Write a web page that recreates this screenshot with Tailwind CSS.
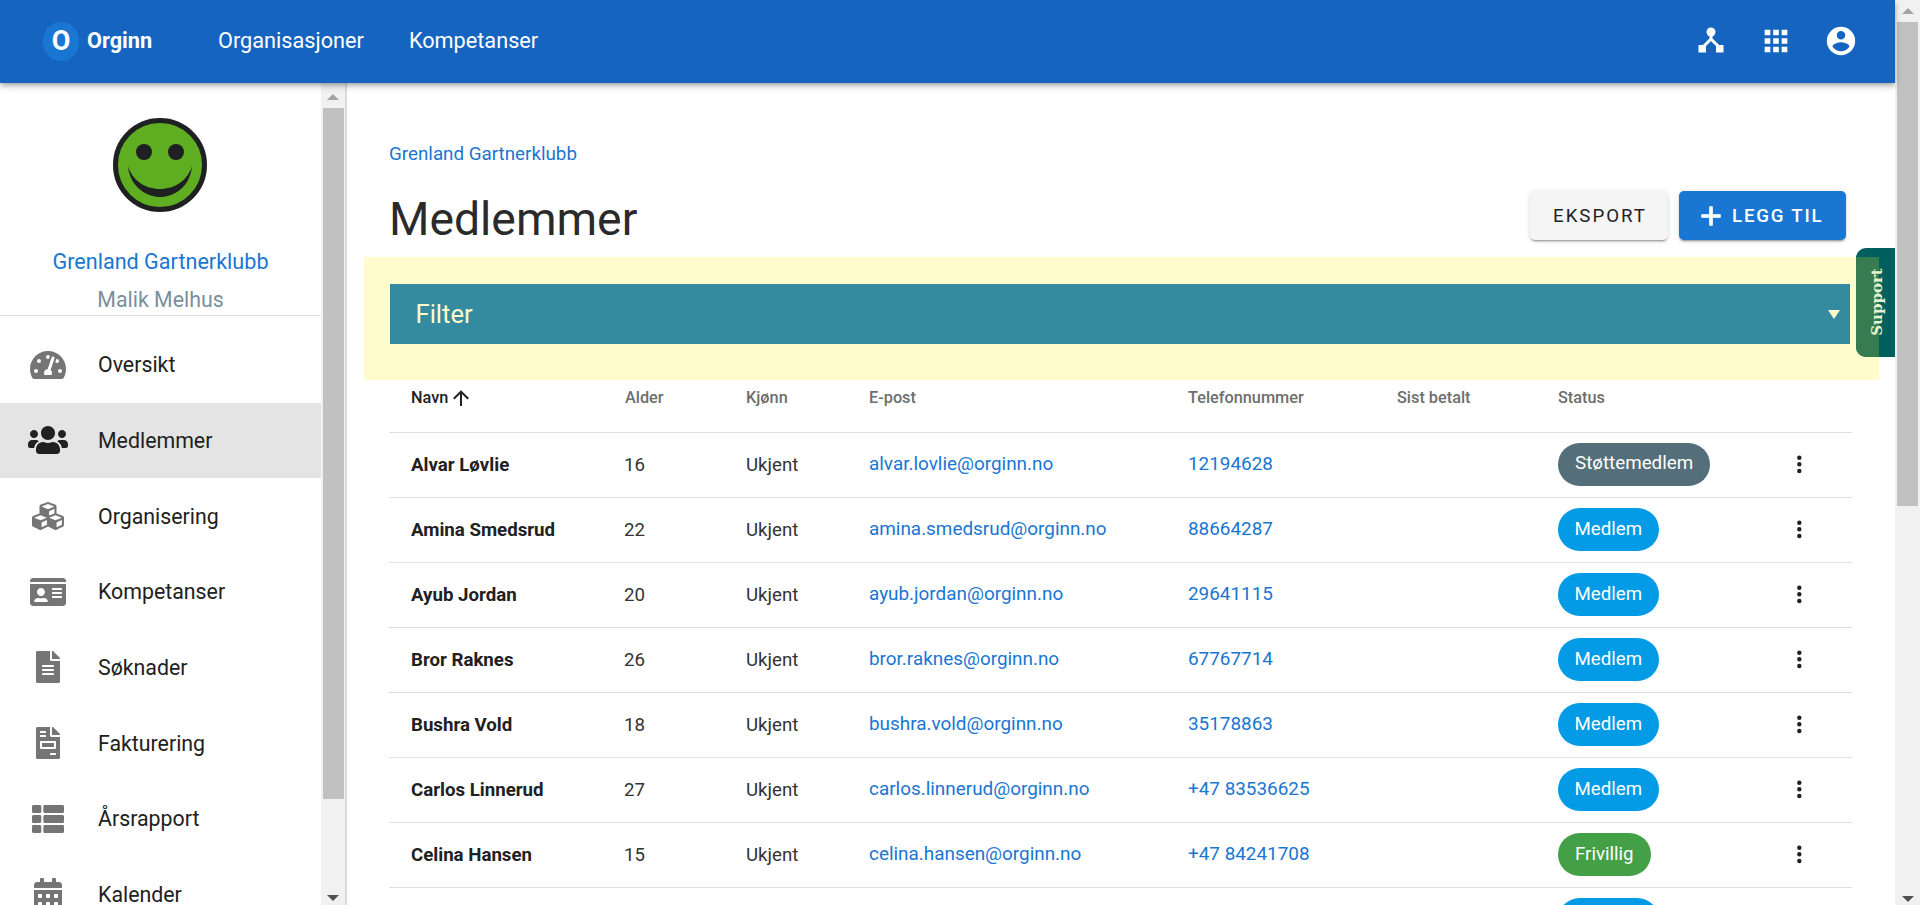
<!DOCTYPE html>
<html lang="no">
<head>
  <meta charset="UTF-8">
  <meta name="viewport" content="width=device-width, initial-scale=1.0">
  <title>Medlemmer - Orginn</title>
  <script src="https://cdn.jsdelivr.net/npm/@tailwindcss/browser@4"></script>
</head>
<body class="bg-white font-[Roboto,sans-serif] text-[#212121]">
  <div class="flex h-[905px] w-[1920px] overflow-hidden">
    <div class="relative flex w-[1895px] flex-col">

      <!-- Top bar -->
      <header class="relative z-20 flex h-[83px] shrink-0 items-center bg-[#1565c0] pl-[43px] pr-[37px] text-white shadow-[0_2px_4px_-1px_rgba(0,0,0,.2),0_4px_5px_0_rgba(0,0,0,.14),0_1px_10px_0_rgba(0,0,0,.12)]">
        <div class="flex h-[39px] w-[36px] items-center justify-center rounded-full bg-[#1976d2] text-[27px] font-bold">O</div>
        <div class="ml-[8px] w-[67px] text-[21.7px] font-bold">Orginn</div>
        <nav class="ml-[64px] flex gap-[45px] text-[21.7px]">
          <span>Organisasjoner</span>
          <span>Kompetanser</span>
        </nav>
        <div class="ml-auto -mt-[2px] flex items-center gap-[31px]">
          <svg class="h-[34px] w-[34px]" viewBox="0 0 34 34" fill="white" stroke="none"><circle cx="17" cy="8" r="4.5"/><rect x="4.5" y="21" width="7.5" height="7.5"/><rect x="22" y="21" width="7.5" height="7.5"/><path d="M17 8V16M17 15L8 24M17 15L26 24" stroke="white" stroke-width="3" fill="none"/></svg>
          <svg class="h-[34px] w-[34px]" viewBox="0 0 24 24" fill="white"><path d="M16,20H20V16H16M16,14H20V10H16M10,8H14V4H10M16,8H20V4H16M10,14H14V10H10M4,14H8V10H4M4,20H8V16H4M10,20H14V16H10M4,8H8V4H4V8Z"/></svg>
          <svg class="h-[34px] w-[34px]" viewBox="0 0 24 24" fill="white"><path d="M12,19.2C9.5,19.2 7.29,17.92 6,16C6.03,14 10,12.9 12,12.9C14,12.9 17.97,14 18,16C16.71,17.92 14.5,19.2 12,19.2M12,5A3,3 0 0,1 15,8A3,3 0 0,1 12,11A3,3 0 0,1 9,8A3,3 0 0,1 12,5M12,2A10,10 0 0,0 2,12A10,10 0 0,0 12,22A10,10 0 0,0 22,12A10,10 0 0,0 12,2Z"/></svg>
        </div>
      </header>

      <div class="flex min-h-0 flex-1">
        <!-- Sidebar -->
        <aside class="flex w-[347px] shrink-0">
          <div class="w-[321px] shrink-0 overflow-hidden">
            <div class="flex h-[233px] flex-col items-center border-b border-[#e0e0e0] pt-[35px]">
              <svg class="mr-[2px] h-[94px] w-[94px]" viewBox="0 0 94 94">
                <circle cx="47" cy="47" r="44.5" fill="#5fad21" stroke="#1f2022" stroke-width="5"/>
                <circle cx="31" cy="34" r="8" fill="#1f2022"/>
                <circle cx="63" cy="34" r="8" fill="#1f2022"/>
                <path d="M15 48C17 70 35 79 47 79C60 79 77 70 79 48C75 62 62 71 47 71C32 71 19 62 15 48Z" fill="#1f2022"/>
              </svg>
              <div class="mt-[37px] text-[21.6px] leading-[25px] text-[#1976d2]">Grenland Gartnerklubb</div>
              <div class="mt-[13px] text-[21.33px] leading-[25px] text-[#78909c]">Malik Melhus</div>
            </div>
            <ul class="pt-[11px] text-[21.33px] text-[#212121]">
              <li class="flex h-[75.67px] items-center">
                <span class="flex w-[98px] justify-center pr-[2px]"><svg class="h-8 w-9 fill-[#757575]" viewBox="0 0 576 512"><path d="M288 32C128.94 32 0 160.94 0 320c0 52.8 14.25 102.26 39.06 144.8 5.61 9.62 16.3 15.2 27.44 15.2h443c11.14 0 21.83-5.58 27.44-15.2C561.75 422.26 576 372.8 576 320c0-159.06-128.94-288-288-288zm0 64c14.71 0 26.58 10.13 30.32 23.65-1.11 2.26-2.64 4.23-3.45 6.67l-9.22 27.67c-5.13 3.49-10.97 6.01-17.64 6.01-17.67 0-32-14.33-32-32S270.33 96 288 96zM96 384c-17.67 0-32-14.33-32-32s14.33-32 32-32 32 14.33 32 32-14.33 32-32 32zm48-160c-17.67 0-32-14.33-32-32s14.33-32 32-32 32 14.33 32 32-14.33 32-32 32zm246.77-72.41l-61.33 184C343.13 347.33 352 364.54 352 384c0 11.72-3.38 22.55-8.88 32H232.88c-5.5-9.45-8.88-20.28-8.88-32 0-33.94 26.5-61.43 59.9-63.59l61.34-184.01c4.17-12.56 17.73-19.45 30.36-15.17 12.57 4.19 19.35 17.79 15.17 30.36zm14.66 57.2l15.52-46.55c3.47-1.29 7.13-2.23 11.05-2.23 17.67 0 32 14.33 32 32s-14.33 32-32 32c-11.38-.01-20.89-6.28-26.57-15.22zM480 384c-17.67 0-32-14.33-32-32s14.33-32 32-32 32 14.33 32 32-14.33 32-32 32z"/></svg></span>
                <span class="pt-[1px]">Oversikt</span>
              </li>
              <li class="flex h-[75.67px] items-center bg-[#e4e4e4]">
                <span class="flex w-[98px] justify-center pr-[2px]"><svg class="h-8 w-10 fill-[#212121]" viewBox="0 0 640 512"><path d="M96 224c35.3 0 64-28.7 64-64s-28.7-64-64-64-64 28.7-64 64 28.7 64 64 64zm448 0c35.3 0 64-28.7 64-64s-28.7-64-64-64-64 28.7-64 64 28.7 64 64 64zm32 32h-64c-17.6 0-33.5 7.1-45.1 18.6 40.3 22.1 68.9 62 75.1 109.4h66c17.7 0 32-14.3 32-32v-32c0-35.3-28.7-64-64-64zm-256 0c61.9 0 112-50.1 112-112S381.9 32 320 32 208 82.1 208 144s50.1 112 112 112zm76.8 32h-8.3c-20.8 10-43.9 16-68.5 16s-47.6-6-68.5-16h-8.3C179.6 288 128 339.6 128 403.2V432c0 26.5 21.5 48 48 48h288c26.5 0 48-21.5 48-48v-28.8c0-63.6-51.6-115.2-115.2-115.2zm-223.7-13.4C161.5 263.1 145.6 256 128 256H64c-35.3 0-64 28.7-64 64v32c0 17.7 14.3 32 32 32h65.9c6.3-47.4 34.9-87.3 75.2-109.4z"/></svg></span>
                <span class="pt-[1px]">Medlemmer</span>
              </li>
              <li class="flex h-[75.67px] items-center">
                <span class="flex w-[98px] justify-center pr-[2px]"><svg class="h-8 w-8 fill-[#757575]" viewBox="0 0 512 512"><path d="M488.6 250.2L392 214V105.5c0-15-9.3-28.4-23.4-33.7l-100-37.5c-8.1-3.1-17.1-3.1-25.3 0l-100 37.5c-14.1 5.3-23.4 18.7-23.4 33.7V214l-96.6 36.2C9.3 255.5 0 268.9 0 283.9V394c0 13.6 7.7 26.1 19.9 32.2l100 50c10.1 5.1 22.1 5.1 32.2 0l103.9-52 103.9 52c10.1 5.1 22.1 5.1 32.2 0l100-50c12.2-6.1 19.9-18.6 19.9-32.2V283.9c0-15-9.3-28.4-23.4-33.7zM358 214.8l-85 31.9v-68.2l85-37v73.3zM154 104.1l102-38.2 102 38.2v.6l-102 41.4-102-41.4v-.6zm84 291.1l-85 42.5v-79.1l85-38.8v75.4zm0-112l-102 41.4-102-41.4v-.6l102-38.2 102 38.2v.6zm240 112l-85 42.5v-79.1l85-38.8v75.4zm0-112l-102 41.4-102-41.4v-.6l102-38.2 102 38.2v.6z"/></svg></span>
                <span class="pt-[1px]">Organisering</span>
              </li>
              <li class="flex h-[75.67px] items-center">
                <span class="flex w-[98px] justify-center pr-[2px]"><svg class="h-8 w-9 fill-[#757575]" viewBox="0 0 576 512"><path d="M528 32H48C21.5 32 0 53.5 0 80v16h576V80c0-26.5-21.5-48-48-48zM0 432c0 26.5 21.5 48 48 48h480c26.5 0 48-21.5 48-48V128H0v304zm352-232c0-4.4 3.6-8 8-8h144c4.4 0 8 3.6 8 8v16c0 4.4-3.6 8-8 8H360c-4.4 0-8-3.6-8-8v-16zm0 64c0-4.4 3.6-8 8-8h144c4.4 0 8 3.6 8 8v16c0 4.4-3.6 8-8 8H360c-4.4 0-8-3.6-8-8v-16zm0 64c0-4.4 3.6-8 8-8h144c4.4 0 8 3.6 8 8v16c0 4.4-3.6 8-8 8H360c-4.4 0-8-3.6-8-8v-16zM176 192c35.3 0 64 28.7 64 64s-28.7 64-64 64-64-28.7-64-64 28.7-64 64-64zM67.1 396.2C75.5 370.5 99.6 352 128 352h8.2c12.3 5.1 25.7 8 39.8 8s27.6-2.9 39.8-8h8.2c28.4 0 52.5 18.5 60.9 44.2 3.2 9.9-5.2 19.8-15.6 19.8H82.7c-10.4 0-18.8-10-15.6-19.8z"/></svg></span>
                <span class="pt-[1px]">Kompetanser</span>
              </li>
              <li class="flex h-[75.67px] items-center">
                <span class="flex w-[98px] justify-center pr-[2px]"><svg class="h-8 w-6 fill-[#757575]" viewBox="0 0 384 512"><path d="M224 136V0H24C10.7 0 0 10.7 0 24v464c0 13.3 10.7 24 24 24h336c13.3 0 24-10.7 24-24V160H248c-13.2 0-24-10.8-24-24zm64 236c0 6.6-5.4 12-12 12H108c-6.6 0-12-5.4-12-12v-8c0-6.6 5.4-12 12-12h168c6.6 0 12 5.4 12 12v8zm0-64c0 6.6-5.4 12-12 12H108c-6.6 0-12-5.4-12-12v-8c0-6.6 5.4-12 12-12h168c6.6 0 12 5.4 12 12v8zm0-72v8c0 6.6-5.4 12-12 12H108c-6.6 0-12-5.4-12-12v-8c0-6.6 5.4-12 12-12h168c6.6 0 12 5.4 12 12zm96-114.1v6.1H256V0h6.1c6.4 0 12.5 2.5 17 7l97.9 98c4.5 4.5 7 10.6 7 16.9z"/></svg></span>
                <span class="pt-[1px]">Søknader</span>
              </li>
              <li class="flex h-[75.67px] items-center">
                <span class="flex w-[98px] justify-center pr-[2px]"><svg class="h-8 w-6 fill-[#757575]" viewBox="0 0 384 512"><path d="M288 256H96v64h192v-64zm89-151L279.1 7c-4.5-4.5-10.6-7-17-7H256v128h128v-6.1c0-6.3-2.5-12.4-7-16.9zm-153 31V0H24C10.7 0 0 10.7 0 24v464c0 13.3 10.7 24 24 24h336c13.3 0 24-10.7 24-24V160H248c-13.2 0-24-10.8-24-24zM64 72c0-4.42 3.58-8 8-8h80c4.42 0 8 3.58 8 8v16c0 4.42-3.58 8-8 8H72c-4.42 0-8-3.58-8-8V72zm0 64c0-4.42 3.58-8 8-8h80c4.42 0 8 3.58 8 8v16c0 4.42-3.58 8-8 8H72c-4.42 0-8-3.58-8-8v-16zm256 304c0 4.42-3.58 8-8 8h-80c-4.42 0-8-3.58-8-8v-16c0-4.42 3.58-8 8-8h80c4.42 0 8 3.58 8 8v16zm0-200v96c0 8.84-7.16 16-16 16H80c-8.84 0-16-7.16-16-16v-96c0-8.84 7.16-16 16-16h224c8.84 0 16 7.16 16 16z"/></svg></span>
                <span class="pt-[1px]">Fakturering</span>
              </li>
              <li class="flex h-[75.67px] items-center">
                <span class="flex w-[98px] justify-center pr-[2px]"><svg class="h-8 w-8 fill-[#757575]" viewBox="0 0 512 512"><path d="M149.333 216v80c0 13.255-10.745 24-24 24H24c-13.255 0-24-10.745-24-24v-80c0-13.255 10.745-24 24-24h101.333c13.255 0 24 10.745 24 24zM0 376v80c0 13.255 10.745 24 24 24h101.333c13.255 0 24-10.745 24-24v-80c0-13.255-10.745-24-24-24H24c-13.255 0-24 10.745-24 24zM125.333 32H24C10.745 32 0 42.745 0 56v80c0 13.255 10.745 24 24 24h101.333c13.255 0 24-10.745 24-24V56c0-13.255-10.745-24-24-24zm80 448H488c13.255 0 24-10.745 24-24v-80c0-13.255-10.745-24-24-24H205.333c-13.255 0-24 10.745-24 24v80c0 13.255 10.745 24 24 24zm-24-424v80c0 13.255 10.745 24 24 24H488c13.255 0 24-10.745 24-24V56c0-13.255-10.745-24-24-24H205.333c-13.255 0-24 10.745-24 24zm24 264H488c13.255 0 24-10.745 24-24v-80c0-13.255-10.745-24-24-24H205.333c-13.255 0-24 10.745-24 24v80c0 13.255 10.745 24 24 24z"/></svg></span>
                <span class="pt-[1px]">Årsrapport</span>
              </li>
              <li class="flex h-[75.67px] items-center">
                <span class="flex w-[98px] justify-center pr-[2px]"><svg class="h-8 w-7 fill-[#757575]" viewBox="0 0 448 512"><path d="M0 464c0 26.5 21.5 48 48 48h352c26.5 0 48-21.5 48-48V192H0v272zm320-196c0-6.6 5.4-12 12-12h40c6.6 0 12 5.4 12 12v40c0 6.6-5.4 12-12 12h-40c-6.6 0-12-5.4-12-12v-40zm0 128c0-6.6 5.4-12 12-12h40c6.6 0 12 5.4 12 12v40c0 6.6-5.4 12-12 12h-40c-6.6 0-12-5.4-12-12v-40zM192 268c0-6.6 5.4-12 12-12h40c6.6 0 12 5.4 12 12v40c0 6.6-5.4 12-12 12h-40c-6.6 0-12-5.4-12-12v-40zm0 128c0-6.6 5.4-12 12-12h40c6.6 0 12 5.4 12 12v40c0 6.6-5.4 12-12 12h-40c-6.6 0-12-5.4-12-12v-40zM64 268c0-6.6 5.4-12 12-12h40c6.6 0 12 5.4 12 12v40c0 6.6-5.4 12-12 12H76c-6.6 0-12-5.4-12-12v-40zm0 128c0-6.6 5.4-12 12-12h40c6.6 0 12 5.4 12 12v40c0 6.6-5.4 12-12 12H76c-6.6 0-12-5.4-12-12v-40zM400 64h-48V16c0-8.8-7.2-16-16-16h-32c-8.8 0-16 7.2-16 16v48H160V16c0-8.8-7.2-16-16-16h-32c-8.8 0-16 7.2-16 16v48H48C21.5 64 0 85.5 0 112v48h448v-48c0-26.5-21.5-48-48-48z"/></svg></span>
                <span class="pt-[1px]">Kalender</span>
              </li>
            </ul>
          </div>
          <!-- Sidebar scrollbar -->
          <div class="flex w-[24px] shrink-0 flex-col bg-[#f1f1f1] pl-[2px]">
            <div class="flex h-[25px] shrink-0 items-center justify-center pr-[2px] pt-[2px]"><svg class="h-[6px] w-[12px]" viewBox="0 0 12 6"><path d="M6 0L12 6H0Z" fill="#a3a3a3"/></svg></div>
            <div class="h-[691px] w-[21px] shrink-0 bg-[#c1c1c1]"></div>
            <div class="flex flex-1 items-end justify-center pb-[4px] pr-[2px]"><svg class="h-[6px] w-[12px]" viewBox="0 0 12 6"><path d="M0 0H12L6 6Z" fill="#505050"/></svg></div>
          </div>
          <div class="w-[2px] shrink-0 bg-[#dcdcdc]"></div>
        </aside>

        <!-- Main content -->
        <main class="min-w-0 flex-1 overflow-hidden pl-[42px] pr-[45px] pt-[59px]">
          <a class="block text-[18.8px] leading-[24px] text-[#1976d2]">Grenland Gartnerklubb</a>
          <div class="flex h-[91px] items-start justify-between">
            <h1 class="mt-[25px] text-[46.3px] leading-[56px] font-normal text-[#2a2a2a]">Medlemmer</h1>
            <div class="mr-[4px] mt-[25px] flex gap-[11px] text-[18.67px]">
              <button class="flex h-[49px] w-[138px] items-center justify-center rounded-[5px] bg-[#f5f5f5] pl-[2px] tracking-[2px] text-[#212121] shadow-[0_3px_1px_-2px_rgba(0,0,0,.2),0_2px_2px_0_rgba(0,0,0,.14),0_1px_5px_0_rgba(0,0,0,.12)]">EKSPORT</button>
              <button class="flex h-[49px] w-[167px] items-center rounded-[5px] bg-[#1976d2] pl-[16px] font-medium tracking-[1.8px] text-white shadow-[0_3px_1px_-2px_rgba(0,0,0,.2),0_2px_2px_0_rgba(0,0,0,.14),0_1px_5px_0_rgba(0,0,0,.12)]">
                <svg class="mr-[5px] h-8 w-8 fill-white stroke-white stroke-[0.7]" viewBox="0 0 24 24"><path d="M19,13H13V19H11V13H5V11H11V5H13V11H19V13Z"/></svg>
                LEGG TIL
              </button>
            </div>
          </div>

          <!-- Filter -->
          <section class="-ml-[25px] w-[1515px] bg-[#fffbcc] pb-[36px] pl-[25.5px] pr-[29px] pt-[27px]">
            <div class="flex h-[60px] items-center justify-between bg-[#348b9f] pl-[26px] pr-[10px] text-[#fffbcc]">
              <span class="text-[25.6px]">Filter</span>
              <svg class="h-[9px] w-[12px]" viewBox="0 0 12 9"><path d="M0 0H12L6 9Z" fill="#fffbcc"/></svg>
            </div>
          </section>

          <!-- Members table -->
          <table class="w-[1463px] table-fixed border-collapse text-left text-[18.67px] text-[#333333]">
            <colgroup>
              <col class="w-[214px]"><col class="w-[121px]"><col class="w-[124px]"><col class="w-[319px]"><col class="w-[209px]"><col class="w-[161px]"><col class="w-[221px]"><col>
            </colgroup>
            <thead class="text-[16.3px] font-medium text-[#6e6e6e]">
              <tr class="h-[52px] border-b border-[#dfdfdf]">
                <th class="pb-[16px] pl-[22px] font-medium text-[#212121]"><span class="flex items-center">Navn<svg class="ml-[1px] h-6 w-6 fill-[#212121]" viewBox="0 0 24 24"><path d="M13,20H11V8L5.5,13.5L4.08,12.08L12,4.16L19.92,12.08L18.5,13.5L13,8V20Z"/></svg></span></th>
                <th class="pb-[16px] pl-[22px] font-medium">Alder</th>
                <th class="pb-[16px] pl-[22px] font-medium">Kjønn</th>
                <th class="pb-[16px] pl-[21px] font-medium">E-post</th>
                <th class="pb-[16px] pl-[21px] font-medium">Telefonnummer</th>
                <th class="pb-[16px] pl-[21px] font-medium">Sist betalt</th>
                <th class="pb-[16px] pl-[21px] font-medium">Status</th>
                <th></th>
              </tr>
            </thead>
            <tbody>
              <tr class="h-[65px] border-b border-[#dfdfdf]">
                <td class="pl-[22px] font-bold text-[#212121]">Alvar Løvlie</td>
                <td class="pl-[21px]">16</td>
                <td class="pl-[22px]">Ukjent</td>
                <td class="pl-[21px] text-[18.9px] text-[#1976d2]">alvar.lovlie@orginn.no</td>
                <td class="pl-[21px] text-[18.9px] text-[#1976d2]">12194628</td>
                <td class="pl-[21px]"></td>
                <td class="pl-[21px]"><span class="inline-flex h-[43px] items-center rounded-full bg-[#546e7a] px-[17px] pb-[2px] text-[18.8px] text-white">Støttemedlem</span></td>
                <td class="pl-[28px]"><svg class="h-[26.67px] w-[26.67px] fill-[#212121]" viewBox="0 0 24 24"><path d="M12,16A2,2 0 0,1 14,18A2,2 0 0,1 12,20A2,2 0 0,1 10,18A2,2 0 0,1 12,16M12,10A2,2 0 0,1 14,12A2,2 0 0,1 12,14A2,2 0 0,1 10,12A2,2 0 0,1 12,10M12,4A2,2 0 0,1 14,6A2,2 0 0,1 12,8A2,2 0 0,1 10,6A2,2 0 0,1 12,4Z"/></svg></td>
              </tr>
              <tr class="h-[65px] border-b border-[#dfdfdf]">
                <td class="pl-[22px] font-bold text-[#212121]">Amina Smedsrud</td>
                <td class="pl-[21px]">22</td>
                <td class="pl-[22px]">Ukjent</td>
                <td class="pl-[21px] text-[18.9px] text-[#1976d2]">amina.smedsrud@orginn.no</td>
                <td class="pl-[21px] text-[18.9px] text-[#1976d2]">88664287</td>
                <td class="pl-[21px]"></td>
                <td class="pl-[21px]"><span class="inline-flex h-[43px] items-center rounded-full bg-[#039be5] px-[16.5px] pb-[2px] text-[18.67px] text-white">Medlem</span></td>
                <td class="pl-[28px]"><svg class="h-[26.67px] w-[26.67px] fill-[#212121]" viewBox="0 0 24 24"><path d="M12,16A2,2 0 0,1 14,18A2,2 0 0,1 12,20A2,2 0 0,1 10,18A2,2 0 0,1 12,16M12,10A2,2 0 0,1 14,12A2,2 0 0,1 12,14A2,2 0 0,1 10,12A2,2 0 0,1 12,10M12,4A2,2 0 0,1 14,6A2,2 0 0,1 12,8A2,2 0 0,1 10,6A2,2 0 0,1 12,4Z"/></svg></td>
              </tr>
              <tr class="h-[65px] border-b border-[#dfdfdf]">
                <td class="pl-[22px] font-bold text-[#212121]">Ayub Jordan</td>
                <td class="pl-[21px]">20</td>
                <td class="pl-[22px]">Ukjent</td>
                <td class="pl-[21px] text-[18.9px] text-[#1976d2]">ayub.jordan@orginn.no</td>
                <td class="pl-[21px] text-[18.9px] text-[#1976d2]">29641115</td>
                <td class="pl-[21px]"></td>
                <td class="pl-[21px]"><span class="inline-flex h-[43px] items-center rounded-full bg-[#039be5] px-[16.5px] pb-[2px] text-[18.67px] text-white">Medlem</span></td>
                <td class="pl-[28px]"><svg class="h-[26.67px] w-[26.67px] fill-[#212121]" viewBox="0 0 24 24"><path d="M12,16A2,2 0 0,1 14,18A2,2 0 0,1 12,20A2,2 0 0,1 10,18A2,2 0 0,1 12,16M12,10A2,2 0 0,1 14,12A2,2 0 0,1 12,14A2,2 0 0,1 10,12A2,2 0 0,1 12,10M12,4A2,2 0 0,1 14,6A2,2 0 0,1 12,8A2,2 0 0,1 10,6A2,2 0 0,1 12,4Z"/></svg></td>
              </tr>
              <tr class="h-[65px] border-b border-[#dfdfdf]">
                <td class="pl-[22px] font-bold text-[#212121]">Bror Raknes</td>
                <td class="pl-[21px]">26</td>
                <td class="pl-[22px]">Ukjent</td>
                <td class="pl-[21px] text-[18.9px] text-[#1976d2]">bror.raknes@orginn.no</td>
                <td class="pl-[21px] text-[18.9px] text-[#1976d2]">67767714</td>
                <td class="pl-[21px]"></td>
                <td class="pl-[21px]"><span class="inline-flex h-[43px] items-center rounded-full bg-[#039be5] px-[16.5px] pb-[2px] text-[18.67px] text-white">Medlem</span></td>
                <td class="pl-[28px]"><svg class="h-[26.67px] w-[26.67px] fill-[#212121]" viewBox="0 0 24 24"><path d="M12,16A2,2 0 0,1 14,18A2,2 0 0,1 12,20A2,2 0 0,1 10,18A2,2 0 0,1 12,16M12,10A2,2 0 0,1 14,12A2,2 0 0,1 12,14A2,2 0 0,1 10,12A2,2 0 0,1 12,10M12,4A2,2 0 0,1 14,6A2,2 0 0,1 12,8A2,2 0 0,1 10,6A2,2 0 0,1 12,4Z"/></svg></td>
              </tr>
              <tr class="h-[65px] border-b border-[#dfdfdf]">
                <td class="pl-[22px] font-bold text-[#212121]">Bushra Vold</td>
                <td class="pl-[21px]">18</td>
                <td class="pl-[22px]">Ukjent</td>
                <td class="pl-[21px] text-[18.9px] text-[#1976d2]">bushra.vold@orginn.no</td>
                <td class="pl-[21px] text-[18.9px] text-[#1976d2]">35178863</td>
                <td class="pl-[21px]"></td>
                <td class="pl-[21px]"><span class="inline-flex h-[43px] items-center rounded-full bg-[#039be5] px-[16.5px] pb-[2px] text-[18.67px] text-white">Medlem</span></td>
                <td class="pl-[28px]"><svg class="h-[26.67px] w-[26.67px] fill-[#212121]" viewBox="0 0 24 24"><path d="M12,16A2,2 0 0,1 14,18A2,2 0 0,1 12,20A2,2 0 0,1 10,18A2,2 0 0,1 12,16M12,10A2,2 0 0,1 14,12A2,2 0 0,1 12,14A2,2 0 0,1 10,12A2,2 0 0,1 12,10M12,4A2,2 0 0,1 14,6A2,2 0 0,1 12,8A2,2 0 0,1 10,6A2,2 0 0,1 12,4Z"/></svg></td>
              </tr>
              <tr class="h-[65px] border-b border-[#dfdfdf]">
                <td class="pl-[22px] font-bold text-[#212121]">Carlos Linnerud</td>
                <td class="pl-[21px]">27</td>
                <td class="pl-[22px]">Ukjent</td>
                <td class="pl-[21px] text-[18.9px] text-[#1976d2]">carlos.linnerud@orginn.no</td>
                <td class="pl-[21px] text-[18.9px] text-[#1976d2]">+47 83536625</td>
                <td class="pl-[21px]"></td>
                <td class="pl-[21px]"><span class="inline-flex h-[43px] items-center rounded-full bg-[#039be5] px-[16.5px] pb-[2px] text-[18.67px] text-white">Medlem</span></td>
                <td class="pl-[28px]"><svg class="h-[26.67px] w-[26.67px] fill-[#212121]" viewBox="0 0 24 24"><path d="M12,16A2,2 0 0,1 14,18A2,2 0 0,1 12,20A2,2 0 0,1 10,18A2,2 0 0,1 12,16M12,10A2,2 0 0,1 14,12A2,2 0 0,1 12,14A2,2 0 0,1 10,12A2,2 0 0,1 12,10M12,4A2,2 0 0,1 14,6A2,2 0 0,1 12,8A2,2 0 0,1 10,6A2,2 0 0,1 12,4Z"/></svg></td>
              </tr>
              <tr class="h-[65px] border-b border-[#dfdfdf]">
                <td class="pl-[22px] font-bold text-[#212121]">Celina Hansen</td>
                <td class="pl-[21px]">15</td>
                <td class="pl-[22px]">Ukjent</td>
                <td class="pl-[21px] text-[18.9px] text-[#1976d2]">celina.hansen@orginn.no</td>
                <td class="pl-[21px] text-[18.9px] text-[#1976d2]">+47 84241708</td>
                <td class="pl-[21px]"></td>
                <td class="pl-[21px]"><span class="inline-flex h-[43px] items-center rounded-full bg-[#43a047] px-[17px] pb-[2px] text-[18.67px] text-white">Frivillig</span></td>
                <td class="pl-[28px]"><svg class="h-[26.67px] w-[26.67px] fill-[#212121]" viewBox="0 0 24 24"><path d="M12,16A2,2 0 0,1 14,18A2,2 0 0,1 12,20A2,2 0 0,1 10,18A2,2 0 0,1 12,16M12,10A2,2 0 0,1 14,12A2,2 0 0,1 12,14A2,2 0 0,1 10,12A2,2 0 0,1 12,10M12,4A2,2 0 0,1 14,6A2,2 0 0,1 12,8A2,2 0 0,1 10,6A2,2 0 0,1 12,4Z"/></svg></td>
              </tr>
              <tr class="h-[65px] border-b border-[#dfdfdf]">
                <td colspan="6"></td>
                <td class="pl-[21px]"><span class="inline-flex h-[43px] items-center rounded-full bg-[#039be5] px-[16.5px] pb-[2px] text-[18.67px] text-white">Medlem</span></td>
                <td></td>
              </tr>
            </tbody>
          </table>
        </main>
      </div>

      <!-- Support tab, hangs over the filter band -->
      <div class="absolute right-0 top-[248px] z-10 h-[109px] w-[39px] overflow-hidden rounded-l-[10px] bg-[#005f5f]">
        <div class="absolute bottom-0 left-0 top-[9px] w-[23px] bg-[#377c50]"></div>
        <span class="absolute left-[-13px] top-[45px] w-[68px] -rotate-90 text-center font-['DejaVu_Serif',serif] text-[15px] leading-[18px] font-bold text-[#e4f2d0]">Support</span>
      </div>
    </div>

    <!-- Page scrollbar -->
    <div class="flex w-[25px] shrink-0 flex-col bg-[#f1f1f1] pl-[2px]">
      <div class="flex h-[22px] shrink-0 items-center justify-center pr-[2px]"><svg class="h-[6px] w-[12px]" viewBox="0 0 12 6"><path d="M6 0L12 6H0Z" fill="#a3a3a3"/></svg></div>
      <div class="h-[484px] w-[21px] shrink-0 bg-[#c1c1c1]"></div>
      <div class="flex flex-1 items-end justify-center pb-[3px] pr-[2px]"><svg class="h-[6px] w-[12px]" viewBox="0 0 12 6"><path d="M0 0H12L6 6Z" fill="#505050"/></svg></div>
    </div>
  </div>
</body>
</html>
